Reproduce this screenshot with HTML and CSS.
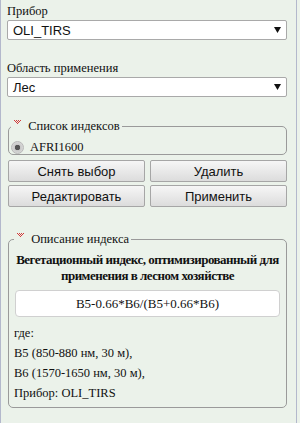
FILE: index.html
```html
<!DOCTYPE html>
<html>
<head>
    <meta charset="UTF-8">
    <meta name="viewport" content="width=device-width, initial-scale=1.0">
    <title>Индексы</title>
    <link rel="stylesheet" href="styles.css">
</head>
<body>
    <div class="panel">
        <div class="field-label">Прибор</div>
        <div class="select">
            <span>OLI_TIRS</span>
            <svg class="arrow" width="7" height="6" viewBox="0 0 7 6"><path d="M0 0H7L3.5 6Z" fill="#111"/></svg>
        </div>

        <div class="field-label second">Область применения</div>
        <div class="select">
            <span>Лес</span>
            <svg class="arrow" width="7" height="6" viewBox="0 0 7 6"><path d="M0 0H7L3.5 6Z" fill="#111"/></svg>
        </div>

        <fieldset class="group index-list">
            <legend>
                <svg class="toggle" width="8" height="5" viewBox="0 0 8 5">
                    <g fill="#d23b3b">
                        <rect x="0" y="0" width="1" height="1"/><rect x="2" y="0" width="1" height="1"/>
                        <rect x="4" y="0" width="1" height="1"/><rect x="6" y="0" width="1" height="1"/>
                        <rect x="1" y="1" width="1" height="1"/><rect x="3" y="1" width="1" height="1"/>
                        <rect x="5" y="1" width="1" height="1"/>
                        <rect x="2" y="2" width="1" height="1"/><rect x="4" y="2" width="1" height="1"/>
                        <rect x="3" y="3" width="1" height="1"/>
                    </g>
                </svg>
                Список индексов
            </legend>
            <label class="radio-row">
                <span class="radio"></span>
                AFRI1600
            </label>
        </fieldset>

        <div class="buttons">
            <button class="btn">Снять выбор</button>
            <button class="btn">Удалить</button>
            <button class="btn">Редактировать</button>
            <button class="btn">Применить</button>
        </div>

        <fieldset class="group description">
            <legend>
                <svg class="toggle" width="8" height="5" viewBox="0 0 8 5">
                    <g fill="#d23b3b">
                        <rect x="0" y="0" width="1" height="1"/><rect x="2" y="0" width="1" height="1"/>
                        <rect x="4" y="0" width="1" height="1"/><rect x="6" y="0" width="1" height="1"/>
                        <rect x="1" y="1" width="1" height="1"/><rect x="3" y="1" width="1" height="1"/>
                        <rect x="5" y="1" width="1" height="1"/>
                        <rect x="2" y="2" width="1" height="1"/><rect x="4" y="2" width="1" height="1"/>
                        <rect x="3" y="3" width="1" height="1"/>
                    </g>
                </svg>
                Описание индекса
            </legend>
            <div class="title">Вегетационный индекс, оптимизированный для применения в лесном хозяйстве</div>
            <div class="formula">B5-0.66*B6/(B5+0.66*B6)</div>
            <div class="line">где:</div>
            <div class="line">B5 (850-880 нм, 30 м),</div>
            <div class="line">B6 (1570-1650 нм, 30 м),</div>
            <div class="line">Прибор: OLI_TIRS</div>
        </fieldset>
    </div>
</body>
</html>
```

FILE: styles.css
```css
html {
    background-color: #ebf2ea;
}

body {
    margin: 0;
    font-family: "Liberation Serif", serif;
    font-size: 12.5px;
    color: #111;
}

.panel {
    width: 297px;
    height: 423px;
    box-sizing: border-box;
    border-left: 1px solid #b3b8cc;
    border-right: 1px solid #b3b8cc;
    padding: 4px 0 0 6px;
    background-color: #ebf2ea;
}

.field-label {
    line-height: 15px;
    height: 15px;
}

.field-label.second {
    margin-top: 21px;
}

.select {
    display: flex;
    align-items: center;
    justify-content: space-between;
    width: 280px;
    height: 20px;
    box-sizing: border-box;
    margin-top: 1px;
    padding: 0 5px 0 5px;
    background-color: #fff;
    border: 1px solid #a9a9a9;
    border-radius: 2px;
    font-family: "Liberation Sans", Arial, sans-serif;
    font-size: 13px;
}

.arrow {
    display: block;
}

.group {
    margin: 0 0 0 1px;
    width: 279px;
    box-sizing: border-box;
    border: 1px solid #9a9a9a;
    border-radius: 5px;
    padding: 0 0 0 2px;
}

.group legend {
    padding: 0 2px 0 3px;
    margin-left: 0;
    line-height: 16px;
}

.toggle {
    vertical-align: 5px;
    margin-right: 3px;
}

.index-list {
    margin-top: 21px;
    height: 37px;
}

.radio-row {
    display: flex;
    align-items: center;
    gap: 6px;
    height: 26px;
}

.radio {
    width: 11px;
    height: 11px;
    border-radius: 50%;
    border: 1px solid #b8b8b8;
    background: radial-gradient(circle, #555 0 2.5px, #c9c9c9 3px, #e4e4e4 100%);
}

.buttons {
    display: grid;
    grid-template-columns: 137px 137px;
    column-gap: 5px;
    row-gap: 3px;
    margin: 5px 0 0 1px;
}

.btn {
    height: 22px;
    margin: 0;
    padding: 0;
    border: 1px solid #a6a6a6;
    border-radius: 2px;
    background: linear-gradient(#f6f6f6, #dcdcdc);
    font-family: "Liberation Sans", Arial, sans-serif;
    font-size: 13px;
    color: #111;
}

.description {
    margin-top: 24px;
    height: 177px;
    padding: 0 5px 0 5px;
}

.title {
    font-size: 13px;
    font-weight: bold;
    text-align: center;
    line-height: 16px;
    margin: 5px -4px 0 -4px;
    letter-spacing: -0.5px;
}

.formula {
    margin: 6px 1px 0 1px;
    height: 27px;
    box-sizing: border-box;
    background-color: #fff;
    border: 1px solid #d0d0d0;
    border-radius: 4px;
    text-align: center;
    line-height: 25px;
    font-size: 13px;
}

.line {
    line-height: 20px;
}

.formula + .line {
    margin-top: 6px;
}
```
